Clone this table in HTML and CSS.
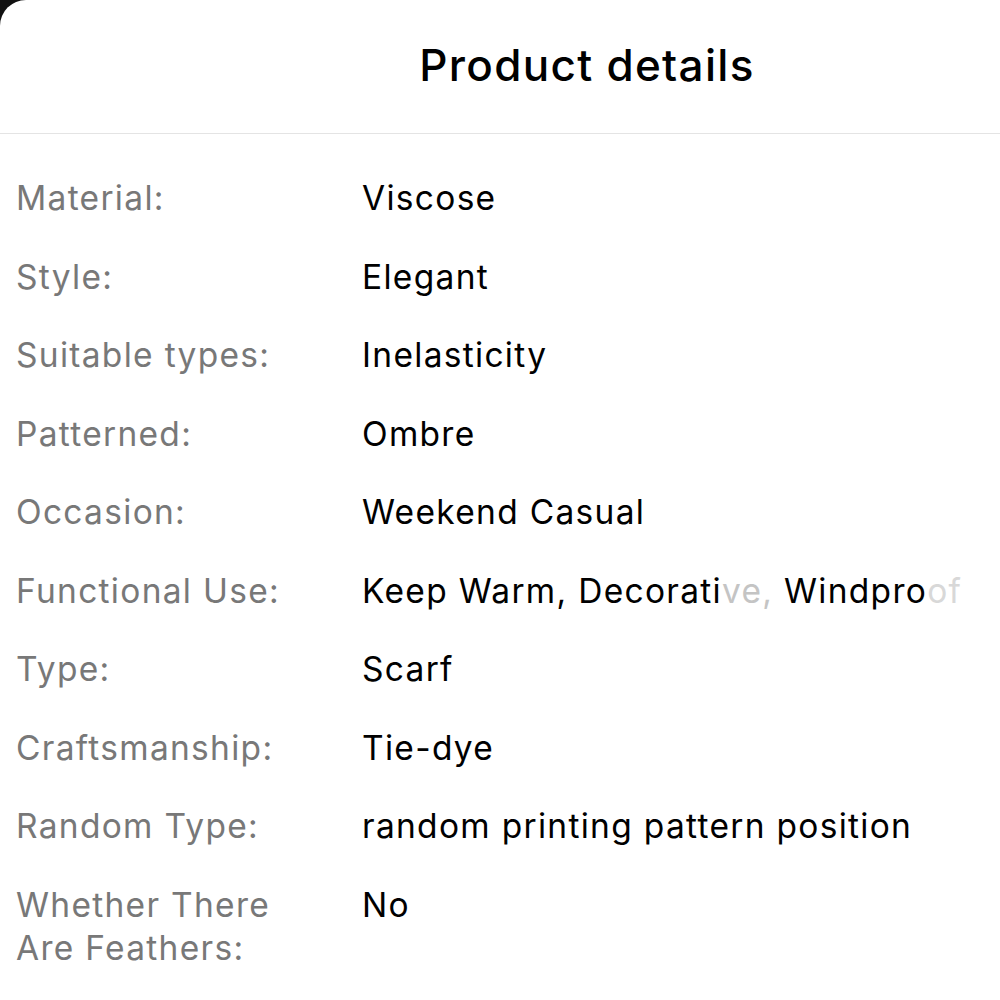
FILE: index.html
```html
<!DOCTYPE html>
<html lang="en">
<head>
    <meta charset="UTF-8">
    <meta name="viewport" content="width=device-width, initial-scale=1.0">
    <title>Product details</title>
    <link rel="stylesheet" href="styles.css">
</head>
<body>
    <div class="sheet">
        <header class="sheet-header">
            <h1 class="sheet-title">Product details</h1>
        </header>

        <dl class="details">
            <div class="detail-row">
                <dt class="detail-label">Material:</dt>
                <dd class="detail-value">Viscose</dd>
            </div>
            <div class="detail-row">
                <dt class="detail-label">Style:</dt>
                <dd class="detail-value">Elegant</dd>
            </div>
            <div class="detail-row">
                <dt class="detail-label">Suitable types:</dt>
                <dd class="detail-value">Inelasticity</dd>
            </div>
            <div class="detail-row">
                <dt class="detail-label">Patterned:</dt>
                <dd class="detail-value">Ombre</dd>
            </div>
            <div class="detail-row">
                <dt class="detail-label">Occasion:</dt>
                <dd class="detail-value">Weekend Casual</dd>
            </div>
            <div class="detail-row">
                <dt class="detail-label">Functional Use:</dt>
                <dd class="detail-value detail-value--nowrap">Keep Warm, Decorati<span class="fade">ve,</span> Windpro<span class="fade fade--end">of</span></dd>
            </div>
            <div class="detail-row">
                <dt class="detail-label">Type:</dt>
                <dd class="detail-value">Scarf</dd>
            </div>
            <div class="detail-row">
                <dt class="detail-label">Craftsmanship:</dt>
                <dd class="detail-value">Tie-dye</dd>
            </div>
            <div class="detail-row">
                <dt class="detail-label">Random Type:</dt>
                <dd class="detail-value">random printing pattern position</dd>
            </div>
            <div class="detail-row">
                <dt class="detail-label">Whether There Are Feathers:</dt>
                <dd class="detail-value">No</dd>
            </div>
        </dl>
    </div>
</body>
</html>
```

FILE: styles.css
```css
:root {
    --color-text-primary: #000000;
    --color-text-secondary: #787878;
    --color-text-faded: #c4c4c4;
    --color-border: #e4e4e4;
    --color-bg: #ffffff;
}

* {
    box-sizing: border-box;
    margin: 0;
    padding: 0;
}

html,
body {
    height: 100%;
}

body {
    font-family: Inter, "Noto Sans", sans-serif;
    background-color: #111111;
    color: var(--color-text-primary);
    overflow: hidden;
}

.sheet {
    min-height: 100%;
    background-color: var(--color-bg);
    border-top-left-radius: 26px;
}

.sheet-header {
    height: 134px;
    border-bottom: 1px solid var(--color-border);
    display: flex;
    align-items: center;
    justify-content: center;
    padding-left: 174px;
    padding-bottom: 3px;
}

.sheet-title {
    font-size: 44px;
    font-weight: 500;
    letter-spacing: 1.3px;
}

.details {
    padding: 43px 0 0 16px;
    display: flex;
    flex-direction: column;
    gap: 35.5px;
}

.detail-row {
    display: grid;
    grid-template-columns: 346px 1fr;
    font-size: 33.5px;
    line-height: 43px;
    letter-spacing: 1.3px;
}

.detail-label {
    color: var(--color-text-secondary);
    padding-right: 60px;
}

.detail-value {
    color: var(--color-text-primary);
}

.detail-value--nowrap {
    white-space: nowrap;
}

.fade {
    color: var(--color-text-faded);
}

.fade--end {
    color: #d8d8d8;
}
```
